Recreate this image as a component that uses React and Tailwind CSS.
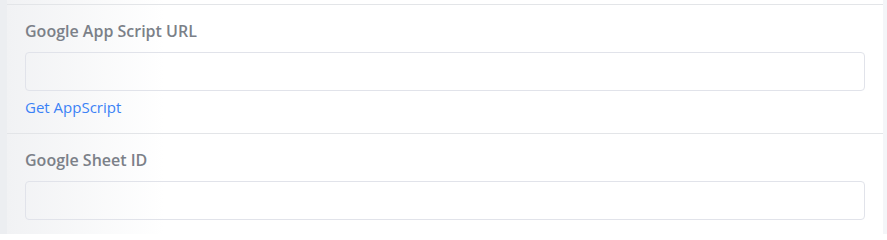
export default function App() {
  return (
    <div
      className="w-[887px] h-[234px] flex bg-[#f4f5f8] overflow-hidden"
      style={{ fontFamily: '"Open Sans", "Noto Sans", sans-serif' }}
    >
      <div className="w-[7px] shrink-0 bg-[#eceef1]" />
      <div className="w-[876px] shrink-0 pt-[4px] bg-gradient-to-r from-[#f1f2f4] via-white via-[18%] to-white">
        <div className="border-t border-[#e3e5e8] px-[18px] pt-[15px] pb-[16px]">
          <label className="block text-[16px] leading-[22px] font-semibold text-[#7b8088]">
            Google App Script URL
          </label>
          <input
            type="text"
            className="mt-[10px] block w-full h-[39px] rounded-[4px] border border-[#e1e3ea] bg-transparent outline-none"
          />
          <a href="#" className="mt-[6px] block text-[15px] leading-[20px] text-[#3b82f6]">
            Get AppScript
          </a>
        </div>
        <div className="border-t border-[#e3e5e8] px-[18px] pt-[15px]">
          <label className="block text-[16px] leading-[22px] font-semibold text-[#7b8088]">
            Google Sheet ID
          </label>
          <input
            type="text"
            className="mt-[10px] block w-full h-[39px] rounded-[4px] border border-[#e1e3ea] bg-transparent outline-none"
          />
        </div>
      </div>
    </div>
  );
}
